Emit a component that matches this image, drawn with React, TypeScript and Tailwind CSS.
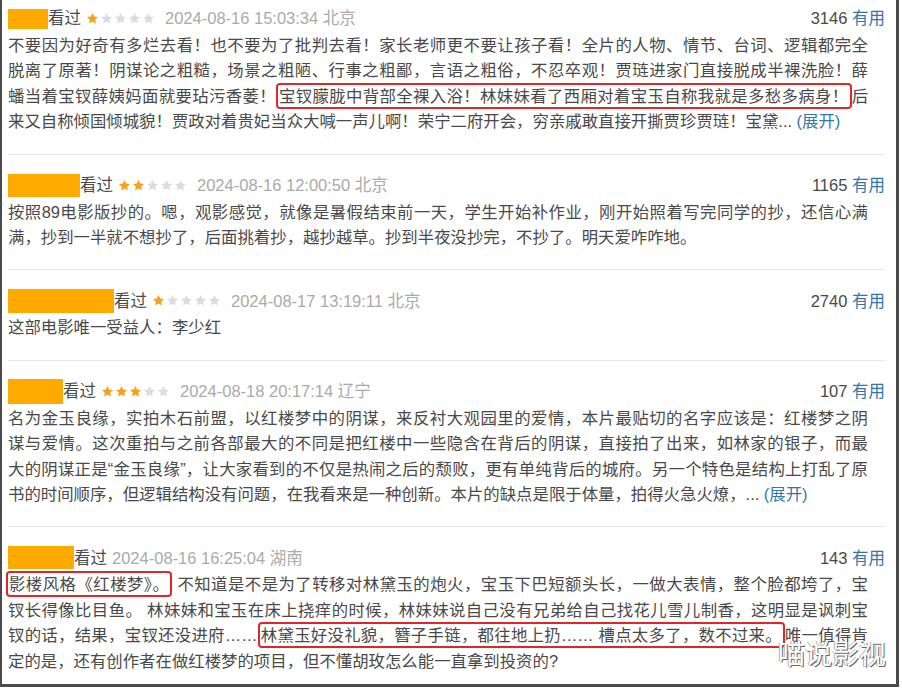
import type { ReactNode } from 'react'

type Seg = string | { box: string; flush?: boolean }

interface Review {
  nameW: number
  nameH: number
  stars?: number
  date: string
  loc: string
  useful: number
  lines: Seg[][]
  more?: boolean
}

const reviews: Review[] = [
  {
    nameW: 40,
    nameH: 20,
    stars: 1,
    date: '2024-08-16 15:03:34',
    loc: '北京',
    useful: 3146,
    more: true,
    lines: [
      ['不要因为好奇有多烂去看！也不要为了批判去看！家长老师更不要让孩子看！全片的人物、情节、台词、逻辑都完全'],
      ['脱离了原著！阴谋论之粗糙，场景之粗陋、行事之粗鄙，言语之粗俗，不忍卒观！贾琏进家门直接脱成半裸洗脸！薛'],
      ['蟠当着宝钗薛姨妈面就要玷污香萎！', { box: '宝钗朦胧中背部全裸入浴！林妹妹看了西厢对着宝玉自称我就是多愁多病身！' }, '后'],
      ['来又自称倾国倾城貌！贾政对着贵妃当众大喊一声儿啊！荣宁二府开会，穷亲戚敢直接开撕贾珍贾琏！宝黛... '],
    ],
  },
  {
    nameW: 72,
    nameH: 23,
    stars: 2,
    date: '2024-08-16 12:00:50',
    loc: '北京',
    useful: 1165,
    lines: [
      ['按照89电影版抄的。嗯，观影感觉，就像是暑假结束前一天，学生开始补作业，刚开始照着写完同学的抄，还信心满'],
      ['满，抄到一半就不想抄了，后面挑着抄，越抄越草。抄到半夜没抄完，不抄了。明天爱咋咋地。'],
    ],
  },
  {
    nameW: 106,
    nameH: 24,
    stars: 1,
    date: '2024-08-17 13:19:11',
    loc: '北京',
    useful: 2740,
    lines: [['这部电影唯一受益人：李少红']],
  },
  {
    nameW: 55,
    nameH: 25,
    stars: 3,
    date: '2024-08-18 20:17:14',
    loc: '辽宁',
    useful: 107,
    more: true,
    lines: [
      ['名为金玉良缘，实拍木石前盟，以红楼梦中的阴谋，来反衬大观园里的爱情，本片最贴切的名字应该是：红楼梦之阴'],
      ['谋与爱情。这次重拍与之前各部最大的不同是把红楼中一些隐含在背后的阴谋，直接拍了出来，如林家的银子，而最'],
      ['大的阴谋正是“金玉良缘”，让大家看到的不仅是热闹之后的颓败，更有单纯背后的城府。另一个特色是结构上打乱了原'],
      ['书的时间顺序，但逻辑结构没有问题，在我看来是一种创新。本片的缺点是限于体量，拍得火急火燎，... '],
    ],
  },
  {
    nameW: 66,
    nameH: 23,
    date: '2024-08-16 16:25:04',
    loc: '湖南',
    useful: 143,
    lines: [
      [{ box: '影楼风格《红楼梦》。', flush: true }, ' 不知道是不是为了转移对林黛玉的炮火，宝玉下巴短额头长，一做大表情，整个脸都垮了，宝'],
      ['钗长得像比目鱼。 林妹妹和宝玉在床上挠痒的时候，林妹妹说自己没有兄弟给自己找花儿雪儿制香，这明显是讽刺宝'],
      ['钗的话，结果，宝钗还没进府……', { box: '林黛玉好没礼貌，簪子手链，都往地上扔…… 槽点太多了，数不过来。' }, '唯一值得肯'],
      ['定的是，还有创作者在做红楼梦的项目，但不懂胡玫怎么能一直拿到投资的?'],
    ],
  },
]

function Star({ on }: { on: boolean }) {
  return (
    <svg viewBox="0 0 24 24" className="h-[13px] w-[13px]">
      <path
        d="M12 1.8l3.1 6.6 7.1.8-5.3 4.9 1.5 7.1L12 17.6l-6.4 3.6 1.5-7.1L1.8 9.2l7.1-.8z"
        fill={on ? '#f8a01c' : '#dcdcdc'}
      />
    </svg>
  )
}

function Line({ segs, last, more }: { segs: Seg[]; last: boolean; more?: boolean }) {
  const parts: ReactNode[] = segs.map((s, i) =>
    typeof s === 'string' ? (
      <span key={i}>{s}</span>
    ) : (
      <span
        key={i}
        className={
          s.flush
            ? '-ml-[2px] rounded-[4px] border-2 border-[#e0262d] px-[1px] py-[2px]'
            : 'rounded-[4px] border-2 border-[#e0262d] px-[1px] py-[2px]'
        }
      >
        {s.box}
      </span>
    )
  )
  return (
    <div className={last ? '' : '[text-align-last:justify]'}>
      {parts}
      {last && more && <span className="text-[#3377aa]">(展开)</span>}
    </div>
  )
}

function ReviewItem({ r, first, end }: { r: Review; first: boolean; end: boolean }) {
  return (
    <div
      className={
        (first ? 'pt-1 ' : 'pt-4 ') +
        (end ? 'pb-2' : 'border-b border-[#e8e8e8] pb-[19px]')
      }
    >
      <div className="flex h-[29px] items-center justify-between text-[16.5px] text-[#494949]">
        <div className="flex items-center">
          <span className="bg-[#ffaa00]" style={{ width: r.nameW, height: r.nameH }} />
          <span>看过</span>
          {r.stars !== undefined && (
            <span className="ml-[5px] flex gap-[1px]">
              {[0, 1, 2, 3, 4].map((i) => (
                <Star key={i} on={i < (r.stars ?? 0)} />
              ))}
            </span>
          )}
          <span className={r.stars !== undefined ? 'ml-[10px] text-[#aaaaaa]' : 'ml-[5px] text-[#aaaaaa]'}>
            {r.date} {r.loc}
          </span>
        </div>
        <div>
          {r.useful} <span className="text-[#3377aa]">有用</span>
        </div>
      </div>
      <div className="w-[860px] text-[16.4px] leading-[25.4px] text-[#494949]">
        {r.lines.map((l, i) => (
          <Line key={i} segs={l} last={i === r.lines.length - 1} more={r.more} />
        ))}
      </div>
    </div>
  )
}

export default function App() {
  return (
    <div className="h-[689px] w-[902px] bg-white font-['Liberation_Sans','Noto_Sans_CJK_SC',sans-serif]">
      <div className="relative h-[687px] w-[899px] border-b-[3px] border-l-2 border-r-[3px] border-[#4a4a4a] pl-[6px] pr-[11px]">
        {reviews.map((r, i) => (
          <ReviewItem key={i} r={r} first={i === 0} end={i === reviews.length - 1} />
        ))}

        {/* watermark */}
        <div className="absolute bottom-[15px] right-[10px] text-[27px] leading-none text-white [text-shadow:1px_1px_0_#666,-1px_0_0_#aaa]">
          喵说影视
        </div>
      </div>
    </div>
  )
}
